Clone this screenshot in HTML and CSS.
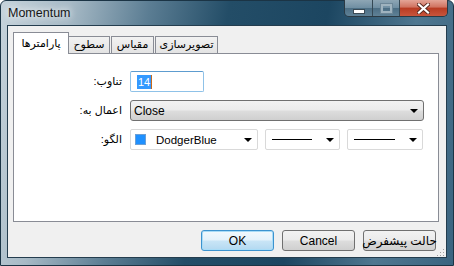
FILE: index.html
```html
<!DOCTYPE html>
<html lang="fa">
<head>
  <meta charset="UTF-8">
  <title>Momentum</title>
  <link rel="stylesheet" href="styles.css">
</head>
<body>

  <div class="window">
    <div class="titlebar">
      <span class="title">Momentum</span>
      <div class="caption-btns">
        <span class="cap-btn cap-min"><span class="min-bar"></span></span>
        <span class="cap-btn cap-max"><span class="max-box"></span></span>
        <span class="cap-btn cap-close">
          <svg width="13" height="11" viewBox="0 0 13 11">
            <path d="M2 1.5 L11 9.5 M11 1.5 L2 9.5" stroke="#5a2a20" stroke-width="4" stroke-linecap="square"/>
            <path d="M2 1.5 L11 9.5 M11 1.5 L2 9.5" stroke="#ffffff" stroke-width="2.2" stroke-linecap="square"/>
          </svg>
        </span>
      </div>
    </div>

    <div class="client">
      <div class="tabs">
        <span class="tab active">پارامترها</span>
        <span class="tab w-levels">سطوح</span>
        <span class="tab w-scale">مقیاس</span>
        <span class="tab w-visual">تصویرسازی</span>
      </div>

      <div class="panel">
        <div class="form-grid">
          <label class="lbl" dir="rtl">تناوب:</label>
          <div class="textbox"><span class="sel">14</span><span class="caret"></span></div>

          <label class="lbl" dir="rtl">اعمال به:</label>
          <div class="combo combo-apply">
            <span>Close</span>
            <span class="arrow"></span>
          </div>

          <label class="lbl" dir="rtl">الگو:</label>
          <div class="style-row">
            <div class="combo-white w-color">
              <span class="swatch"></span>
              <span class="color-name">DodgerBlue</span>
              <span class="arrow"></span>
            </div>
            <div class="combo-white w-line">
              <span class="line"></span>
              <span class="arrow"></span>
            </div>
            <div class="combo-white w-line2">
              <span class="line"></span>
              <span class="arrow"></span>
            </div>
          </div>
        </div>
      </div>

      <div class="buttons">
        <span class="btn btn-default">OK</span>
        <span class="btn">Cancel</span>
        <span class="btn" dir="rtl">حالت پیشفرض</span>
      </div>

      <span class="grip"></span>
    </div>
  </div>

</body>
</html>
```

FILE: styles.css
```css
body {
  margin: 0;
  padding: 0;
  font-family: 'Liberation Sans', 'DejaVu Sans', sans-serif;
  font-size: 11px;
  color: #000;
  background: #fff;
}

.window {
  width: 454px;
  height: 266px;
  box-sizing: border-box;
  display: flex;
  flex-direction: column;
  border: 1px solid #1b3445;
  border-radius: 6px 6px 0 0;
  background: linear-gradient(100deg, #c6d3db 0%, #a7bac6 14%, #5b7d93 30%, #234d67 46%, #1c4661 66%, #4f7790 84%, #3a6480 100%);
}

.titlebar {
  height: 24px;
  display: flex;
  justify-content: space-between;
  align-items: flex-start;
}

.title {
  margin: 5px 0 0 7px;
  font-size: 12.5px;
  color: #161616;
  text-shadow: 0 0 6px rgba(255, 255, 255, 0.9), 0 0 10px rgba(255, 255, 255, 0.7);
}

.caption-btns {
  display: flex;
  margin-right: 5px;
  margin-top: -1px;
  border: 1px solid #2b3a44;
  border-top: none;
  border-radius: 0 0 5px 5px;
  overflow: hidden;
}

.cap-btn {
  height: 16px;
  display: flex;
  align-items: center;
  justify-content: center;
}

.cap-min {
  width: 27px;
  border-right: 1px solid #354955;
  background: linear-gradient(#8ea6b5 0%, #6f8ea2 50%, #4c6e84 51%, #5f8196 100%);
}

.cap-max {
  width: 26px;
  border-right: 1px solid #354955;
  background: linear-gradient(#8ea6b5 0%, #6f8ea2 50%, #4c6e84 51%, #5f8196 100%);
}

.cap-close {
  width: 47px;
  background: linear-gradient(#e4a597 0%, #d0725f 45%, #b83b22 50%, #c9553c 100%);
}

.min-bar {
  width: 10px;
  height: 3px;
  margin-top: 6px;
  background: #fff;
  border: 1px solid #3a4a55;
}

.max-box {
  width: 7px;
  height: 5px;
  border: 2px solid #9fb3bf;
  outline: 1px solid #6d8798;
}

.client {
  position: relative;
  flex: 1;
  margin: 0 6px 7px 6px;
  border: 1px solid #243d4e;
  background: #f0f0f0;
  padding: 6px 7px 0 5px;
  display: flex;
  flex-direction: column;
}

.tabs {
  display: flex;
  align-items: flex-end;
  height: 21px;
  position: relative;
  z-index: 1;
}

.tab {
  height: 17px;
  box-sizing: border-box;
  border: 1px solid #898c95;
  border-bottom: none;
  background: linear-gradient(#f2f2f2, #e3e3e3);
  text-align: center;
  line-height: 15px;
  margin-left: -1px;
  white-space: nowrap;
}

.tab.active {
  height: 22px;
  width: 56px;
  margin-left: 0;
  margin-bottom: -1px;
  background: #fff;
  line-height: 20px;
  position: relative;
  z-index: 2;
}

.w-levels { width: 42px; }
.w-scale { width: 43px; margin-left: 1px; }
.w-visual { width: 63px; margin-left: 1px; }

.panel {
  height: 169px;
  box-sizing: border-box;
  border: 1px solid #898c95;
  background: #fff;
}

.form-grid {
  display: grid;
  grid-template-columns: 108px auto;
  column-gap: 8px;
  row-gap: 8px;
  padding-top: 17px;
  align-items: center;
}

.lbl {
  text-align: right;
  white-space: nowrap;
}

.textbox {
  width: 74px;
  height: 21px;
  box-sizing: border-box;
  border: 1px solid #8fc2e8;
  border-top-color: #5d9ccf;
  border-radius: 2px;
  display: flex;
  align-items: center;
  padding-left: 6px;
}

.sel {
  background: #3399ff;
  color: #fff;
  line-height: 14px;
  padding: 0 1px;
}

.caret {
  width: 1px;
  height: 14px;
  background: #c96a1a;
}

.combo {
  height: 21px;
  box-sizing: border-box;
  border: 1px solid #707070;
  border-radius: 3px;
  background: linear-gradient(#f2f2f2 0%, #ebebeb 48%, #dddddd 52%, #cfcfcf 100%);
  display: flex;
  align-items: center;
  justify-content: space-between;
  padding: 0 5px 0 3px;
  font-size: 12px;
}

.combo-apply { width: 294px; }

.arrow {
  width: 0;
  height: 0;
  border-left: 4px solid transparent;
  border-right: 4px solid transparent;
  border-top: 4px solid #000;
  flex: none;
}

.style-row {
  display: flex;
  gap: 7px;
}

.combo-white {
  height: 21px;
  box-sizing: border-box;
  border: 1px solid #d9d9d9;
  border-radius: 2px;
  background: #fff;
  display: flex;
  align-items: center;
  padding: 0 5px 0 4px;
  font-size: 12px;
}

.w-color { width: 128px; }
.w-line { width: 75px; }
.w-line2 { width: 76px; }

.swatch {
  width: 11px;
  height: 11px;
  background: #1e90ff;
  border: 1px solid #6a9fd6;
  box-sizing: border-box;
  flex: none;
}

.color-name {
  margin-left: 10px;
  flex: 1;
  font-size: 11.5px;
}

.line {
  flex: 1;
  height: 1px;
  background: #000;
  margin: 0 14px 0 2px;
}

.buttons {
  display: flex;
  justify-content: flex-end;
  gap: 8px;
  margin-top: 8px;
  padding-right: 3px;
}

.btn {
  width: 73px;
  height: 21px;
  box-sizing: border-box;
  border: 1px solid #707070;
  border-radius: 3px;
  background: linear-gradient(#f2f2f2 0%, #ebebeb 48%, #dddddd 52%, #cfcfcf 100%);
  display: flex;
  align-items: center;
  justify-content: center;
  font-size: 12px;
  white-space: nowrap;
}

.btn-default {
  border-color: #3c93cf;
  background: linear-gradient(#f2f9fd 0%, #e4f2fb 48%, #c9e5f6 52%, #b3d9f1 100%);
  box-shadow: inset 0 0 0 1px #a9dcf7;
}

.grip {
  position: absolute;
  right: 2px;
  bottom: 1px;
  width: 8px;
  height: 8px;
  background: radial-gradient(circle, #a0a0a0 0.8px, transparent 1px) 0 0 / 3px 3px;
  clip-path: polygon(100% 0, 100% 100%, 0 100%);
}
```
